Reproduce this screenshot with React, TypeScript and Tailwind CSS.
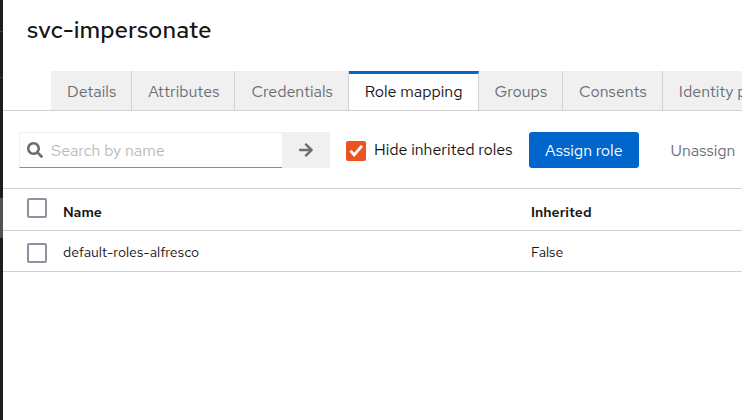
import { useState } from "react";

const tabs = [
  "Details",
  "Attributes",
  "Credentials",
  "Role mapping",
  "Groups",
  "Consents",
  "Identity provider links",
];

const roles = [{ name: "default-roles-alfresco", inherited: "False" }];

function SearchIcon() {
  return (
    <svg viewBox="0 0 512 512" className="size-4 shrink-0 fill-[#6a6e73]" aria-hidden="true">
      <path d="M505 442.700 405.300 343c-4.500-4.500-10.600-7-17-7H372c27.600-35.300 44-79.700 44-128C416 93.100 322.900 0 208 0S0 93.100 0 208s93.100 208 208 208c48.300 0 92.700-16.400 128-44v16.300c0 6.400 2.500 12.500 7 17l99.700 99.700c9.400 9.400 24.600 9.400 33.900 0l28.300-28.300c9.400-9.400 9.400-24.600.1-34zM208 336c-70.700 0-128-57.200-128-128 0-70.700 57.200-128 128-128 70.700 0 128 57.200 128 128 0 70.700-57.200 128-128 128z" />
    </svg>
  );
}

function ArrowIcon() {
  return (
    <svg viewBox="0 0 448 512" className="h-4 w-[14px] fill-[#6a6e73]" aria-hidden="true">
      <path d="M190.500 66.900l22.200-22.200c9.400-9.400 24.600-9.400 33.900 0L441 239c9.400 9.400 9.400 24.600 0 33.900L246.600 467.300c-9.400 9.400-24.600 9.400-33.900 0l-22.200-22.200c-9.500-9.500-9.300-25 .4-34.300L311.400 296H24c-13.300 0-24-10.700-24-24v-32c0-13.300 10.700-24 24-24h287.400L190.900 101.200c-9.800-9.300-10-24.800-.4-34.300z" />
    </svg>
  );
}

function RowCheckbox({ label }: { label: string }) {
  return (
    <input
      type="checkbox"
      aria-label={label}
      className="block size-5 appearance-none rounded-xs border-2 border-[#918fa0] bg-white checked:border-[#e95420] checked:bg-[#e95420]"
    />
  );
}

export default function App() {
  const [active, setActive] = useState("Role mapping");
  const [hidden, setHidden] = useState(true);

  return (
    <div className="flex min-h-screen overflow-hidden bg-white font-['Red_Hat_Text','Lato',sans-serif] text-[#151515]">
      <aside className="flex w-[3px] shrink-0 flex-col bg-[#1b1d21]">
        <div className="h-8 border-b border-[#3c3f42]" />
        <div className="h-[46px] border-b border-[#3c3f42]" />
        <div className="h-[120px]" />
        <div className="h-10 bg-[#4f5255]" />
      </aside>
      <main className="min-w-0 flex-1">
        <h1 className="px-6 pt-[14px] text-2xl leading-8 font-medium">svc-impersonate</h1>
        <div role="tablist" className="mt-[25px] flex overflow-hidden border-b border-[#d2d2d2] pl-12">
          {tabs.map((tab) => (
            <button
              key={tab}
              type="button"
              role="tab"
              aria-selected={tab === active}
              onClick={() => setActive(tab)}
              className={`shrink-0 border-r border-[#d2d2d2] pr-[15px] pl-4 whitespace-nowrap ${
                tab === active
                  ? "-mb-px h-10 border-t-3 border-t-[#0066cc] bg-white pb-0.5"
                  : "h-[39px] bg-[#f0f0f0] pt-0.5 text-[#6a6e73]"
              }`}
            >
              {tab}
            </button>
          ))}
        </div>
        <div className="flex items-center overflow-hidden pt-[21px] pb-5 pl-4 whitespace-nowrap">
          <form className="flex h-9 w-[311px] shrink-0" onSubmit={(e) => e.preventDefault()}>
            <label className="flex flex-1 items-center gap-2 border border-r-0 border-[#f0f0f0] border-b-[#8a8d90] pl-[7px]">
              <SearchIcon />
              <input
                type="text"
                aria-label="Search by name"
                placeholder="Search by name"
                className="w-full min-w-0 bg-transparent pt-0.5 outline-none placeholder:text-[#b8bbbe]"
              />
            </label>
            <button type="submit" aria-label="Search" className="flex w-12 items-center justify-center bg-[#f0f0f0]">
              <ArrowIcon />
            </button>
          </form>
          <label className="ml-4 flex shrink-0 items-center gap-2">
            <span className="relative mt-0.5 block size-5">
              <input
                type="checkbox"
                checked={hidden}
                onChange={(e) => setHidden(e.target.checked)}
                className="block size-5 appearance-none rounded-xs border-2 border-[#918fa0] checked:border-[#e95420] checked:bg-[#e95420]"
              />
              <svg viewBox="0 0 20 20" className="pointer-events-none absolute inset-0 size-5" aria-hidden="true">
                <path d="M4.500 9.800 8.200 13.900 15.900 4.900" fill="none" stroke="white" strokeWidth="2.800" />
              </svg>
            </span>
            <span className="w-[139px]">Hide inherited roles</span>
          </label>
          <button type="button" className="ml-4 h-9 shrink-0 rounded-[3px] bg-[#0066cc] px-4 pt-0.5 text-white">
            Assign role
          </button>
          <button type="button" disabled className="ml-4 h-9 shrink-0 px-4 pt-0.5 text-[#6a6e73]">
            Unassign
          </button>
        </div>
        <table className="w-full table-fixed border-collapse text-left text-sm">
          <thead>
            <tr className="h-[42px] border-y border-[#d2d2d2]">
              <th className="w-[60px] pb-1 pl-6">
                <RowCheckbox label="Select all rows" />
              </th>
              <th className="w-[468px] pt-1 font-semibold">Name</th>
              <th className="pt-1 font-semibold">Inherited</th>
            </tr>
          </thead>
          <tbody>
            {roles.map((role) => (
              <tr key={role.name} className="h-[41px] border-b border-[#d2d2d2]">
                <td className="pt-1 pl-6">
                  <RowCheckbox label={`Select ${role.name}`} />
                </td>
                <td className="pt-0.5">{role.name}</td>
                <td className="pt-0.5">{role.inherited}</td>
              </tr>
            ))}
          </tbody>
        </table>
      </main>
    </div>
  );
}
